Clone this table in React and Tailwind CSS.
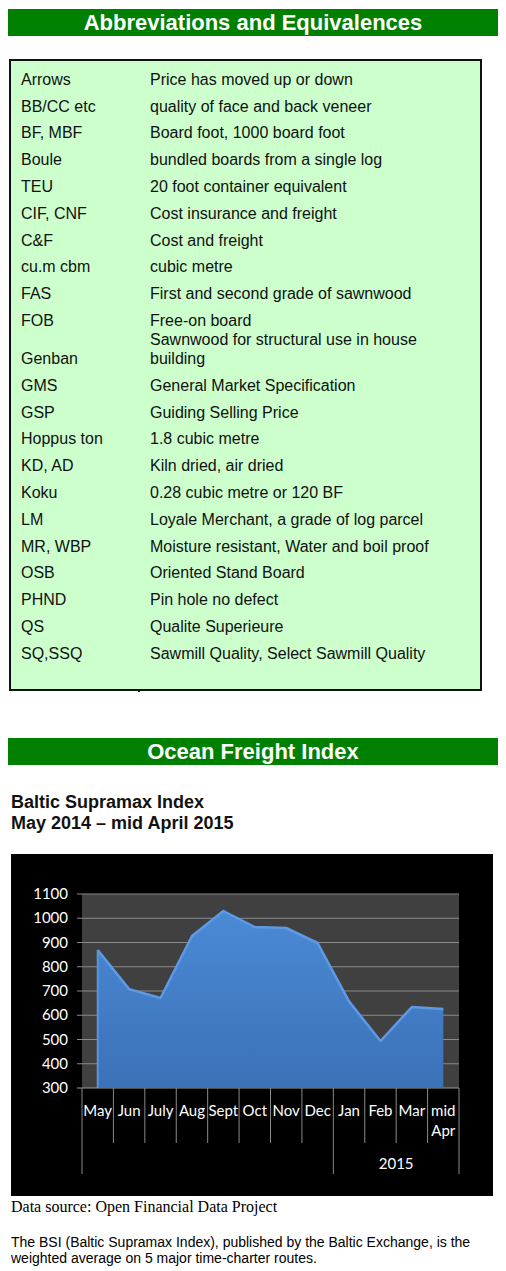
const ROWS = [
    ['Arrows', ['Price has moved up or down']],
    ['BB/CC etc', ['quality of face and back veneer']],
    ['BF, MBF', ['Board foot, 1000 board foot']],
    ['Boule', ['bundled boards from a single log']],
    ['TEU', ['20 foot container equivalent']],
    ['CIF, CNF', ['Cost insurance and freight']],
    ['C&F', ['Cost and freight']],
    ['cu.m cbm', ['cubic metre']],
    ['FAS', ['First and second grade of sawnwood']],
    ['FOB', ['Free-on board']],
    ['Genban', ['Sawnwood for structural use in house', 'building']],
    ['GMS', ['General Market Specification']],
    ['GSP', ['Guiding Selling Price']],
    ['Hoppus ton', ['1.8 cubic metre']],
    ['KD, AD', ['Kiln dried, air dried']],
    ['Koku', ['0.28 cubic metre or 120 BF']],
    ['LM', ['Loyale Merchant, a grade of log parcel']],
    ['MR, WBP', ['Moisture resistant, Water and boil proof']],
    ['OSB', ['Oriented Stand Board']],
    ['PHND', ['Pin hole no defect']],
    ['QS', ['Qualite Superieure']],
    ['SQ,SSQ', ['Sawmill Quality, Select Sawmill Quality']],
];

const MONTHS = ['May', 'Jun', 'July', 'Aug', 'Sept', 'Oct', 'Nov', 'Dec', 'Jan', 'Feb', 'Mar', 'mid'];
const VALUES = [869, 708, 671, 927, 1030, 964, 960, 898, 657, 494, 634, 626];

// plot geometry, relative to the black chart box
const X0 = 71, X1 = 448, Y300 = 234, PX = 0.2425;
const CAT = (X1 - X0) / 12;
const yOf = v => Y300 - (v - 300) * PX;
const xOf = i => X0 + (i + 0.5) * CAT;
const AXIS_FONT = "Lato, 'Open Sans', sans-serif";

function Banner({ children }) {
    return (
        <div className="mx-2 h-[27px] bg-[#008000] flex items-center justify-center">
            <h2 className="text-white font-bold text-[22px] leading-none" style={{ fontFamily: '"Liberation Sans", Arial, sans-serif' }}>{children}</h2>
        </div>
    );
}

function FreightChart() {
    const pts = VALUES.map((v, i) => `${xOf(i).toFixed(1)},${yOf(v).toFixed(1)}`);
    const area = `M${xOf(0)},${Y300} L${pts.join(' L')} L${xOf(11)},${Y300} Z`;
    const top = `M${pts.join(' L')}`;
    return (
        <svg width="482" height="342" viewBox="0 0 482 342" className="block">
            <defs>
                <linearGradient id="fill" x1="0" y1="0" x2="0" y2="1">
                    <stop offset="0" stopColor="#4b8ad6" />
                    <stop offset="1" stopColor="#3b71b7" />
                </linearGradient>
            </defs>
            <rect width="482" height="342" fill="#000" />
            <rect x={X0} y="40" width={X1 - X0} height={Y300 - 40} fill="#404040" />
            {[300, 400, 500, 600, 700, 800, 900, 1000, 1100].map(v => (
                <g key={v}>
                    <line x1="66" x2={X1} y1={yOf(v)} y2={yOf(v)} stroke={v === 300 ? '#9a9a9a' : '#8a8a8a'} strokeWidth="1" />
                    <text x="57" y={yOf(v) + 5} textAnchor="end" fill="#fff" fontSize="15" fontFamily={AXIS_FONT}>{v}</text>
                </g>
            ))}
            <path d={area} fill="url(#fill)" />
            <path d={top} fill="none" stroke="#5d9ae6" strokeWidth="2.5" strokeLinejoin="round" />
            <line x1={xOf(0)} x2={xOf(0)} y1={yOf(VALUES[0])} y2={Y300} stroke="#5a96e0" strokeWidth="2" />
            {Array.from({ length: 13 }).map((_, i) => {
                const long = i === 0 || i === 8 || i === 12;
                const x = X0 + i * CAT;
                return <line key={i} x1={x} x2={x} y1={Y300} y2={long ? 320 : 289} stroke="#8a8a8a" strokeWidth="1" />;
            })}
            {MONTHS.map((m, i) => (
                <text key={m} x={xOf(i)} y="262" textAnchor="middle" fill="#fff" fontSize="15" fontFamily={AXIS_FONT}>{m}</text>
            ))}
            <text x={xOf(11)} y="282" textAnchor="middle" fill="#fff" fontSize="15" fontFamily={AXIS_FONT}>Apr</text>
            <text x={X0 + 10 * CAT} y="315" textAnchor="middle" fill="#fff" fontSize="15" fontFamily={AXIS_FONT}>2015</text>
        </svg>
    );
}

export default function App() {
    return (
        <div className="w-[506px] min-h-[1271px] bg-white text-[#111]" style={{ fontFamily: '"Liberation Sans", Arial, sans-serif' }}>
            <div className="h-[9px]" />
            <Banner>Abbreviations and Equivalences</Banner>

            {/* Abbreviations table */}
            <div className="relative ml-[9px] mt-[23px] w-[473px] h-[632px] border-[2.5px] border-[#111] bg-[#ccffcc] pl-[10px]">
                <div className="h-[1px]" />
                {ROWS.map(([abbr, lines]) => (
                    <div key={abbr} className={`flex items-end text-[16px] leading-[19px] ${lines.length > 1 ? 'h-[38px]' : 'h-[26.8px]'}`}>
                        <div className="w-[129px] shrink-0">{abbr}</div>
                        <div>{lines.map(l => <div key={l}>{l}</div>)}</div>
                    </div>
                ))}
                <div className="absolute left-[127px] -bottom-[3px] w-[2px] h-[2px] bg-[#111]" />
            </div>

            <div className="h-[47px]" />
            <Banner>Ocean Freight Index</Banner>

            {/* Chart heading */}
            <div className="mt-[27px] ml-[11px] font-bold text-[18px] leading-[21px]">
                <p>Baltic Supramax Index</p>
                <p>May 2014 – mid April 2015</p>
            </div>

            <div className="ml-[11px] mt-[20px]">
                <FreightChart />
            </div>

            <p className="ml-[11px] mt-[1px] text-[16px] leading-[19px] text-black" style={{ fontFamily: '"Liberation Serif", "Times New Roman", serif' }}>
                Data source: Open Financial Data Project
            </p>
            <p className="ml-[11px] mt-[18px] text-[14px] leading-[16px] text-black w-[485px]">
                The BSI (Baltic Supramax Index), published by the Baltic Exchange, is the weighted average on 5 major time-charter routes.
            </p>
        </div>
    );
}
